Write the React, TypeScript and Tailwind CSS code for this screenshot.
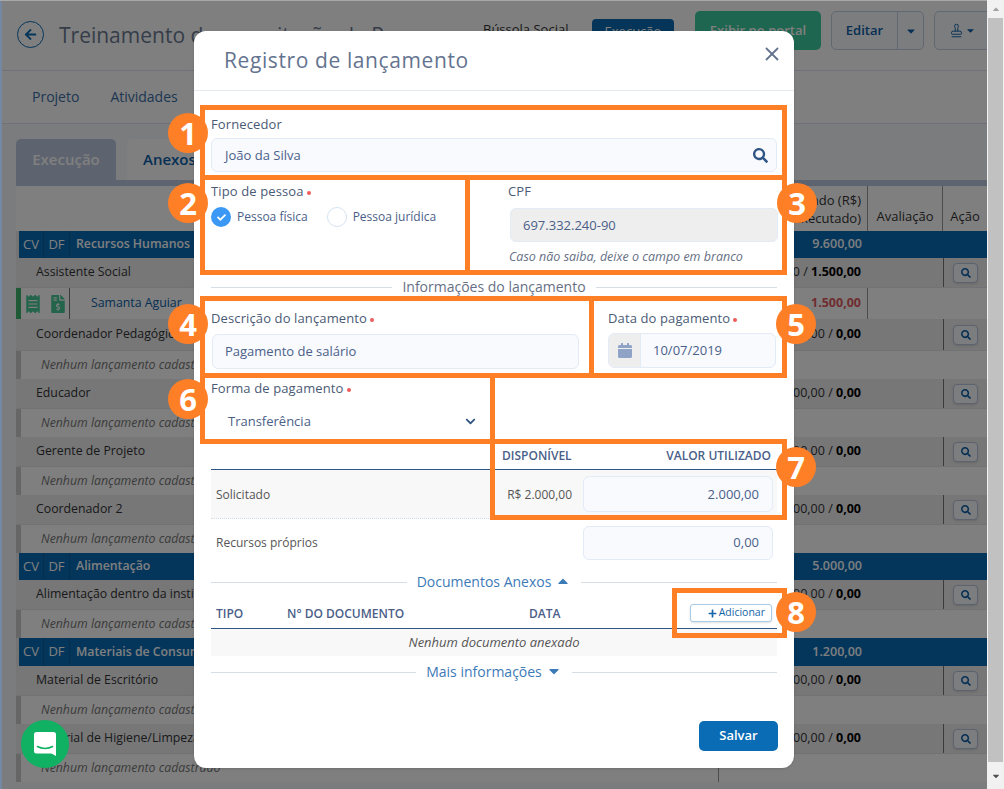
import React from "react";
import { FaSearch, FaCheck, FaChevronDown, FaArrowLeft, FaCaretDown, FaCaretUp, FaPlus, FaReceipt, FaFileInvoiceDollar } from "react-icons/fa";
import { X, Stamp } from "lucide-react";

type Row =
  | { t: "head"; name: string; total: string; tall?: boolean }
  | { t: "item"; name: string; value: string; done: string; tall?: boolean }
  | { t: "person"; name: string; value: string }
  | { t: "none" };

const rows: Row[] = [
  { t: "head", name: "Recursos Humanos", total: "9.600,00" },
  { t: "item", name: "Assistente Social", value: "1.500,00", done: "1.500,00" },
  { t: "person", name: "Samanta Aguiar", value: "1.500,00" },
  { t: "item", name: "Coordenador Pedagógico", value: "1.500,00", done: "0,00", tall: true },
  { t: "none" },
  { t: "item", name: "Educador", value: "3.500,00", done: "0,00" },
  { t: "none" },
  { t: "item", name: "Gerente de Projeto", value: "2.500,00", done: "0,00" },
  { t: "none" },
  { t: "item", name: "Coordenador 2", value: "1.500,00", done: "0,00" },
  { t: "none" },
  { t: "head", name: "Alimentação", total: "5.000,00" },
  { t: "item", name: "Alimentação dentro da instituição", value: "5.000,00", done: "0,00" },
  { t: "none" },
  { t: "head", name: "Materiais de Consumo", total: "1.200,00", tall: true },
  { t: "item", name: "Material de Escritório", value: "700,00", done: "0,00" },
  { t: "none" },
  { t: "item", name: "Material de Higiene/Limpeza", value: "500,00", done: "0,00" },
  { t: "none" },
];

function TableRow({ row }: { row: Row }) {
  if (row.t === "head") {
    return (
      <div className={`flex items-center border-l-[3px] border-[#e8e8ea] bg-[#086cb8] text-[12.3px] font-semibold text-white ${row.tall ? "h-[28px]" : "h-[27px]"}`}>
        <span className="flex h-full w-[25px] items-center justify-center border-r border-[#0a5c9c] text-[13px] font-normal">CV</span>
        <span className="flex h-full w-[26px] items-center justify-center border-r border-[#0a5c9c] text-[13px] font-normal">DF</span>
        <span className="w-[649px] pl-[6px]">{row.name}</span>
        <span className="w-[149px] pr-[6px] text-right text-[12.5px]">{row.total}</span>
      </div>
    );
  }
  if (row.t === "item") {
    return (
      <div className={`flex items-center border-b border-[#e2e4ea] bg-[#eeeef0] text-[12.3px] text-[#333333] ${row.tall ? "h-[32px]" : "h-[30px]"}`}>
        <span className="w-[703px] pl-[20px]">{row.name}</span>
        <span className="w-[224px] whitespace-nowrap pr-[82px] text-right text-[12.5px]">
          {row.value} / <b className="text-black">{row.done}</b>
        </span>
        <span className="flex h-full w-[44px] items-center justify-center border-l border-[#777777]">
          <span className="flex h-[20px] w-[25px] items-center justify-center rounded-[4px] border border-[#b9c7dc] bg-[#f8fafe] text-[#0c5fa8] shadow-sm">
            <FaSearch size={10} />
          </span>
        </span>
      </div>
    );
  }
  if (row.t === "person") {
    return (
      <div className="flex h-[31px] items-center bg-white text-[12.3px]">
        <span className="h-full w-[5px] bg-[#3fb56f]" />
        <span className="flex h-full w-[49px] items-center gap-[7px] border-r border-[#777777] pl-[3px]">
          <FaReceipt size={18} className="text-[#48c996]" />
          <FaFileInvoiceDollar size={18} className="text-[#48c996]" />
        </span>
        <span className="w-[649px] pl-[21px] text-[#0a5ea8]">{row.name}</span>
        <span className="flex h-full w-[149px] items-center justify-end border-r border-[#999999] pr-[6px] text-[12.5px] font-bold text-[#e05a5f]">{row.value}</span>
      </div>
    );
  }
  return (
    <div className="flex h-[28px] items-center bg-white text-[12.3px] italic text-[#777777]">
      <span className="h-full w-[5px] bg-[#cccccc]" />
      <span className="flex h-full w-[698px] items-center border-r border-[#999999] pl-[20px]">Nenhum lançamento cadastrado</span>
    </div>
  );
}

function Background() {
  return (
    <div className="flex h-full flex-col bg-white text-[13px]">
      <div className="flex h-[71px] shrink-0 items-start border-b border-[#dde3ee] pl-[17px]">
        <span className="mt-[21px] flex h-[27px] w-[27px] shrink-0 items-center justify-center rounded-full border border-[#0a6cb5] text-[#0a6cb5]">
          <FaArrowLeft size={13} />
        </span>
        <span className="ml-[15px] mt-[20px] w-[424px] shrink-0 truncate text-[21px] text-[#6b7a93]">Treinamento de capacitação de Pessoas</span>
        <span className="mt-[20px] w-[109px] shrink-0 text-[13px] text-[#333333]">Bússola Social</span>
        <span className="mt-[19px] flex h-[25px] w-[82px] shrink-0 items-center justify-center rounded-[4px] bg-[#0a6cb5] text-white">Execução</span>
        <span className="ml-[21px] mt-[11px] flex h-[39px] w-[126px] shrink-0 items-center justify-center rounded-[5px] bg-[#3ecca0] font-semibold text-white">Exibir no portal</span>
        <span className="ml-[10px] mt-[11px] flex h-[39px] w-[93px] shrink-0 items-center rounded-[5px] border border-[#c4d0e3] bg-[#f8fafe] font-semibold text-[#0a5ea8]">
          <span className="flex h-full flex-1 items-center justify-center border-r border-[#c4d0e3]">Editar</span>
          <span className="flex w-[25px] justify-center"><FaCaretDown size={12} /></span>
        </span>
        <span className="ml-[10px] mt-[11px] flex h-[39px] w-[60px] shrink-0 items-center gap-[1px] rounded-[5px] border border-[#c4d0e3] bg-[#f8fafe] pl-[14px] text-[#0a5ea8]">
          <Stamp size={15} strokeWidth={1.5} /><FaCaretDown size={11} />
        </span>
      </div>
      <div className="flex h-[53px] shrink-0 items-center gap-[31px] border-b border-[#dde3ee] pb-[1px] pl-[32px] text-[14px] text-[#3a6ea5]">
        <span>Projeto</span>
        <span>Atividades</span>
      </div>
      <div className="flex-1 overflow-hidden bg-[#f7f8fa]">
        <div className="flex gap-[11px] pl-[16px] pt-[15px] text-[15px] font-semibold">
          <span className="flex h-[41px] w-[100px] items-center justify-center rounded-t-[5px] bg-[#bac6de] text-white">Execução</span>
          <span className="flex h-[41px] w-[100px] items-center rounded-t-[5px] bg-white pl-[16px] text-[#0a5ea8]">Anexos</span>
        </div>
        <div className="ml-[16px] border-t-[6px] border-[#bac6de] bg-white">
          <div className="flex h-[45px] items-stretch pl-[703px] text-[13px] leading-[18px] text-[#333333]">
            <span className="flex w-[149px] flex-col justify-center border-x border-[#999999] pr-[6px] pt-[1px] text-right">
              <span>Solicitado (R$)</span>
              <span>(Executado)</span>
            </span>
            <span className="flex w-[75px] items-end justify-center border-r border-[#999999] pb-[6px]">Avaliação</span>
            <span className="flex w-[44px] items-end justify-center pb-[6px]">Ação</span>
          </div>
          {rows.map((r, i) => (
            <TableRow key={i} row={r} />
          ))}
        </div>
      </div>
    </div>
  );
}

const Required = () => <span className="ml-[3px] inline-block h-[4px] w-[4px] rounded-full bg-[#ef5b5b] align-middle" />;

function Label({ children, req }: { children: React.ReactNode; req?: boolean }) {
  return (
    <div className="h-[18px] text-[13px] leading-[18px] tracking-[0.12px] text-[#4a5a75]">
      {children}
      {req && <Required />}
    </div>
  );
}

const inputClass = "flex items-center rounded-[6px] border border-[#e3ebf6] bg-[#f8fafe] pt-[1px] text-[13px] text-[#4a6088]";

function Divider({ label, caret, blue }: { label: string; caret?: "up" | "down"; blue?: boolean }) {
  return (
    <div className="flex h-[20px] items-center">
      <span className="h-px flex-1 bg-[#d5dde6]" />
      <span className={`flex items-center gap-[4px] px-[10px] pb-[2px] text-[14px] ${blue ? "text-[#3d7ab8]" : "text-[#667085]"}`}>
        {label}
        {caret === "up" && <FaCaretUp size={16} />}
        {caret === "down" && <FaCaretDown size={16} />}
      </span>
      <span className="h-px flex-1 bg-[#d5dde6]" />
    </div>
  );
}

function Modal() {
  return (
    <div className="absolute left-[194px] top-[31px] flex h-[737px] w-[600px] flex-col rounded-[12px] bg-white font-['Open_Sans',sans-serif] text-[13px] shadow-sm">
      <div className="flex h-[60px] shrink-0 items-center justify-between border-b border-[#e4e8ef] pl-[30px] pr-[11px]">
        <span className="text-[21px] tracking-[0.6px] text-[#64748f]">Registro de lançamento</span>
        <X size={22} className="-mt-[13px] text-[#64748f]" />
      </div>
      <div className="flex flex-1 flex-col px-[17px] pb-[17px]">
        <div className="mt-[24px]"><Label>Fornecedor</Label></div>
        <div className={`${inputClass} mt-[5px] h-[34px] justify-between pl-[13px] pr-[8px]`}>
          <span>João da Silva</span>
          <FaSearch size={15} className="text-[#2f5585]" />
        </div>

        <div className="mt-[10px] flex h-[88px]">
          <div className="w-[297px]">
            <Label req>Tipo de pessoa</Label>
            <div className="mt-[7px] flex items-center text-[12px] text-[#4a6088]">
              <span className="flex h-[20px] w-[20px] items-center justify-center rounded-full bg-[#3b99f5] text-white"><FaCheck size={9} /></span>
              <span className="ml-[6px]">Pessoa física</span>
              <span className="ml-[19px] h-[20px] w-[20px] rounded-full border border-[#d5e3f2]" />
              <span className="ml-[6px]">Pessoa jurídica</span>
            </div>
          </div>
          <div className="flex-1">
            <Label>CPF</Label>
            <div className="-mr-[1px] ml-[2px] mt-[8px] flex h-[34px] items-center rounded-[6px] border border-[#e3ebf6] bg-[#eeeeee] pl-[12px] pt-[2px] text-[13px] text-[#4a6088]">697.332.240-90</div>
            <div className="ml-[1px] mt-[6px] whitespace-nowrap text-[12.5px] italic text-[#667085]">Caso não saiba, deixe o campo em branco</div>
          </div>
        </div>

        <div className="mt-[7px]"><Divider label="Informações do lançamento" /></div>

        <div className="mt-[12px] flex">
          <div className="w-[397px]">
            <Label req>Descrição do lançamento</Label>
            <div className={`${inputClass} ml-[1px] mt-[7px] h-[35px] w-[367px] pl-[12px]`}>Pagamento de salário</div>
          </div>
          <div className="flex-1">
            <Label req>Data do pagamento</Label>
            <div className={`${inputClass} mt-[6px] h-[35px] w-[168px] overflow-hidden !pt-0`}>
              <span className="flex h-full w-[32px] items-center justify-center border-r border-[#e3ebf6] bg-[#eeeeee]">
                <svg width="14" height="15" viewBox="0 0 14 15" fill="#8fa3c7">
                  <rect x="3" y="0" width="2" height="3" rx="0.5" />
                  <rect x="9" y="0" width="2" height="3" rx="0.5" />
                  <path d="M1.5 2h11A1.5 1.5 0 0 1 14 3.5V5H0V3.5A1.5 1.5 0 0 1 1.5 2z" />
                  <path d="M0 6h14v7.5a1.5 1.5 0 0 1-1.5 1.5h-11A1.5 1.5 0 0 1 0 13.5z" />
                </svg>
              </span>
              <span className="pl-[12px] pt-[1px]">10/07/2019</span>
            </div>
          </div>
        </div>

        <div className="mt-[10px]"><Label req>Forma de pagamento</Label></div>
        <div className="mt-[7px] flex h-[34px] w-[270px] items-center justify-between pl-[17px] pr-[5px] pt-[1px] text-[13px] text-[#4a6088]">
          <span>Transferência</span>
          <FaChevronDown size={11} className="text-[#2f5585]" />
        </div>

        <div className="mt-[8px] flex h-[24px] items-start justify-between border-b border-[#2f5585] pl-[291px] pr-[6px] pt-[1px] text-[12px] font-semibold text-[#4a6088]">
          <span>DISPONÍVEL</span>
          <span>VALOR UTILIZADO</span>
        </div>
        <div className="flex h-[49px] items-center border-b border-dotted border-[#d5dde6] bg-[#f8f8f8] pl-[5px] pr-[4px] text-[12px] text-[#555555]">
          <span className="flex-1 pt-[1px]">Solicitado</span>
          <span className="mr-[11px] pt-[1px]">R$ 2.000,00</span>
          <span className={`${inputClass} h-[36px] w-[190px] justify-end pr-[13px]`}>2.000,00</span>
        </div>
        <div className="flex h-[47px] items-center pl-[5px] pr-[4px] text-[12px] text-[#555555]">
          <span className="flex-1 pt-[1px]">Recursos próprios</span>
          <span className={`${inputClass} h-[34px] w-[190px] justify-end pr-[13px]`}>0,00</span>
        </div>

        <div className="mt-[6px]"><Divider label="Documentos Anexos" caret="up" blue /></div>

        <div className="mt-[6px] flex h-[31px] items-center border-b border-[#2f5585] pl-[5px] pr-[5px] text-[12px] font-semibold text-[#4a6088]">
          <span className="w-[71px] pt-[1px]">TIPO</span>
          <span className="w-[242px] pt-[1px]">N° DO DOCUMENTO</span>
          <span className="flex-1 pt-[1px]">DATA</span>
          <button className="flex h-[18px] w-[82px] items-center justify-end gap-[2px] rounded-[3px] border border-[#a9cbe6] bg-white pr-[6px] text-[10.5px] font-normal text-[#1565a8] shadow-sm">
            <FaPlus size={9} />Adicionar
          </button>
        </div>
        <div className="flex h-[27px] items-center justify-center bg-[#f8f8f8] text-[13px] italic text-[#555555]">Nenhum documento anexado</div>

        <div className="mt-[6px]"><Divider label="Mais informações" caret="down" blue /></div>

        <div className="mt-auto flex justify-end">
          <button className="-mr-[1px] h-[30px] w-[79px] rounded-[5px] bg-[#0a6cb5] text-[13px] font-semibold text-white">Salvar</button>
        </div>
      </div>
    </div>
  );
}

const boxes = [
  "left-[200px] top-[105px] w-[587px] h-[75px]",
  "left-[200px] top-[175px] w-[270px] h-[100px]",
  "left-[465px] top-[175px] w-[322px] h-[100px]",
  "left-[200px] top-[296px] w-[394px] h-[82px]",
  "left-[589px] top-[296px] w-[198px] h-[82px]",
  "left-[200px] top-[373px] w-[295px] h-[71px]",
  "left-[490px] top-[439px] w-[297px] h-[81px]",
  "left-[672px] top-[588px] w-[115px] h-[50px]",
];

const badges: [string, string][] = [
  ["1", "left-[168px] top-[113px]"],
  ["2", "left-[168px] top-[183px]"],
  ["3", "left-[777px] top-[183px]"],
  ["4", "left-[168px] top-[304px]"],
  ["5", "left-[776px] top-[304px]"],
  ["6", "left-[168px] top-[379px]"],
  ["7", "left-[776px] top-[447px]"],
  ["8", "left-[776px] top-[592px]"],
];

export default function App() {
  return (
    <div className="relative flex h-[789px] w-[1004px] overflow-hidden bg-white font-['Open_Sans',sans-serif]">
      <div className="relative h-full w-[987px] shrink-0 overflow-hidden">
        <Background />
        <div className="absolute inset-0 bg-black/50" />
        <div className="absolute bottom-0 left-0 top-0 w-[2px] bg-[#7488a3]" />
        <div className="absolute left-0 right-0 top-0 h-px bg-[#a8a8a8]" />
      </div>
      <div className="flex h-full w-[17px] flex-col items-center bg-[#f1f1f1] text-[#505050]">
        <div className="flex h-[18px] w-full items-center justify-center text-[#a3a3a3]"><FaCaretUp size={10} /></div>
        <div className="w-[15px] flex-1 bg-[#c1c1c1]" />
        <div className="flex h-[27px] w-full items-center justify-center"><FaCaretDown size={10} /></div>
      </div>

      <Modal />

      {boxes.map((b) => (
        <div key={b} className={`pointer-events-none absolute border-[5px] border-[#ff7f27] ${b}`} />
      ))}
      {badges.map(([n, pos]) => (
        <div key={n} className={`absolute flex h-[40px] w-[40px] items-center justify-center rounded-full bg-[#ff7f27] text-[31px] font-bold leading-none text-white ${pos}`}>{n}</div>
      ))}

      <div className="absolute left-[21px] top-[720px] flex h-[48px] w-[48px] items-center justify-center rounded-full bg-[#10b162]">
        <svg width="22" height="24" viewBox="0 0 22 24" fill="none">
          <path d="M2.5 0h17A2.5 2.5 0 0 1 22 2.5V24l-4.5-2.5h-15A2.5 2.5 0 0 1 0 19V2.5A2.5 2.5 0 0 1 2.5 0z" fill="#fff" />
          <path d="M3.5 14.5c4 2.6 11 2.6 15 0" stroke="#10b162" strokeWidth="1.5" strokeLinecap="round" />
        </svg>
      </div>
    </div>
  );
}
